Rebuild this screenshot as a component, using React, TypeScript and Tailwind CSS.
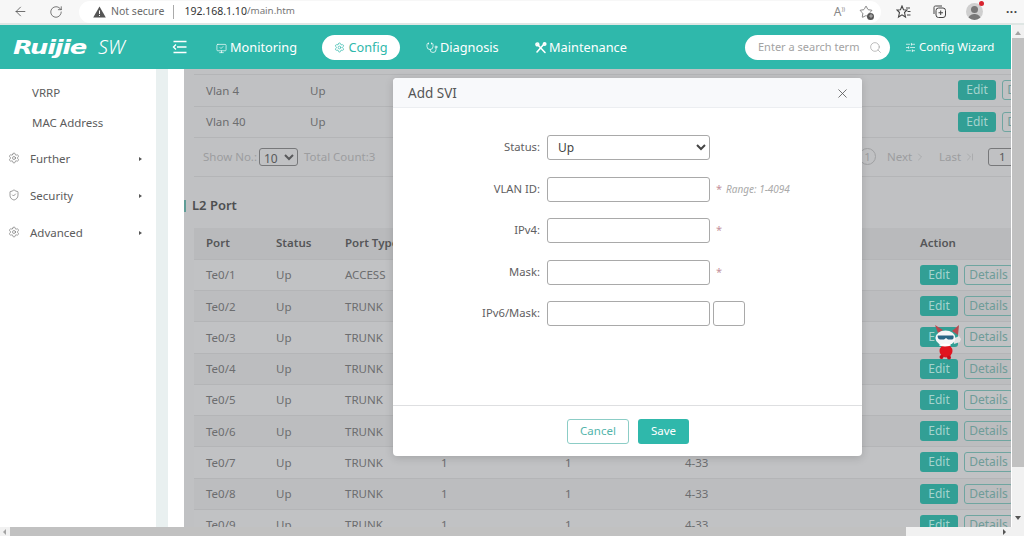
import React from "react";
import { ArrowLeft, RotateCw, Search, Settings, MonitorCheck, Stethoscope, SlidersHorizontal, X, Star, ChevronRight, ChevronLast, ShieldCheck, Plus } from "lucide-react";

const cols = ["w-[70px] shrink-0", "w-[69px] shrink-0", "w-[96px] shrink-0", "w-[124px] shrink-0", "w-[120px] shrink-0", "w-[235px] shrink-0"];

function Edit() {
  return <span className="flex h-[20px] w-[38px] shrink-0 items-center justify-center rounded-[3px] bg-[#329f95] text-[12px] text-[#a5d3ce]">Edit</span>;
}
function Details() {
  return <span className="ml-[6px] flex h-[20px] w-[49px] shrink-0 items-center justify-center rounded-[3px] border border-[#6fa5a0] text-[12px] text-[#6f9c98]">Details</span>;
}

function PortRow({ port, type, a, b, c, dark }: { port: string; type: string; a?: string; b?: string; c?: string; dark?: boolean }) {
  return (
    <div className={`flex h-[31.25px] shrink-0 items-center border-b border-[#b4b5b7] pl-[12px] text-[11.5px] text-[#6c6d6f] ${dark ? "bg-[#bcbdbf]" : "bg-[#c1c2c4]"}`}>
      <span className={cols[0]}>{port}</span>
      <span className={cols[1]}>Up</span>
      <span className={cols[2]}>{type}</span>
      <span className={cols[3]}>{a}</span>
      <span className={cols[4]}>{b}</span>
      <span className={cols[5]}>{c}</span>
      <Edit />
      <Details />
    </div>
  );
}

function VlanRow({ name }: { name: string }) {
  return (
    <div className="flex h-[31.25px] shrink-0 items-center border-b border-[#b4b5b7] pl-[12px] text-[11.5px] text-[#6c6d6f]">
      <span className="w-[104px] shrink-0">{name}</span>
      <span className="w-[648px] shrink-0">{name ? "Up" : ""}</span>
      <Edit />
      <Details />
    </div>
  );
}

function Field({ label, children }: { label: string; children: React.ReactNode }) {
  return (
    <div className="flex h-[25px] items-center">
      <span className="mr-[7px] w-[147px] text-right text-[11.25px] text-[#5f6062]">{label}</span>
      {children}
    </div>
  );
}

const inputCls = "h-[25px] w-[163px] rounded-[3px] border border-[#a9a9a9] bg-white";

function Star2() {
  return <span className="ml-[6px] text-[11px] text-[#c4929c]">*</span>;
}

function MenuIcon() {
  return (
    <svg width="16" height="14" viewBox="0 0 16 14" fill="none" stroke="white" strokeWidth="1.4">
      <path d="M1.500 1.500h13M5 7h9.500M1.500 12.500h13M4 4.500 1.500 7 4 9.500" />
    </svg>
  );
}
function ToolsIcon() {
  return (
    <svg width="12" height="12" viewBox="0 0 12 12" fill="none" stroke="white" strokeWidth="1.6" strokeLinecap="round">
      <path d="M2.500 2.500 10 10.500M9.500 1.500 2 10" />
      <circle cx="2.400" cy="2.400" r="1.400" />
      <circle cx="9.600" cy="2" r="1.200" />
    </svg>
  );
}
function Tri() {
  return <span className="h-0 w-0 border-y-[2.5px] border-l-[3px] border-y-transparent border-l-[#555]" />;
}
function SideItem({ icon, label }: { icon: React.ReactNode; label: string }) {
  return (
    <div className="flex h-[37px] items-center pl-[8px] pr-[14px] text-[11.5px] text-[#5c5c5c]">
      <span className="-mt-[2px] flex w-[22px] text-[#666]">{icon}</span>
      <span className="flex-1">{label}</span>
      <Tri />
    </div>
  );
}
function Mascot() {
  return (
    <svg width="30" height="36" viewBox="0 0 30 36" className="absolute left-[748px] top-[255px]">
      <path d="M6 9 3 1l8 5zM20 7l7-6-1 10z" fill="#b8484f" />
      <path d="M21 15l6-3 2 3-1 3-6 2z" fill="#e2e3e4" />
      <circle cx="14" cy="27" r="6.500" fill="#e0141f" />
      <circle cx="9.500" cy="33" r="2" fill="#c40f1a" />
      <circle cx="17" cy="33.500" r="2" fill="#c40f1a" />
      <ellipse cx="13.500" cy="14" rx="10" ry="7.500" fill="#f6f7f8" />
      <path d="M6 11.500h15c1 0 1 4-1 4h-4l-2-1.500-2 1.500H8c-2 0-3-4-2-4z" fill="#2a6786" />
      <ellipse cx="13" cy="21" rx="6" ry="1.500" fill="#ffffff" />
    </svg>
  );
}
function FavIcon() {
  return (
    <svg width="15" height="14" viewBox="0 0 15 14" fill="none" stroke="#444" strokeWidth="1.1" className="ml-[15px]">
      <path d="M6 1 7.500 4.700 11 5 8.500 7.500 9.500 12 6 9.800 2.500 12 3.500 7.500 1 5 4.500 4.700z" />
      <path d="M10 3h4M11.500 6.500h3M11 10h3.500" />
    </svg>
  );
}

export default function App() {
  return (
    <div className="flex h-[536px] w-[1024px] flex-col overflow-hidden bg-white font-['Noto_Sans','Open_Sans',sans-serif]">
      {/* browser chrome */}
      <div className="flex h-[25px] shrink-0 items-center border-b-2 border-[#dfe6e4] bg-[#f7f7f7] text-[#444]">
        <ArrowLeft size={15} strokeWidth={1.2} className="ml-[13px]" />
        <RotateCw size={14} strokeWidth={1.2} className="ml-[21px]" />
        <div className="ml-[16px] flex h-[22px] w-[802px] items-center rounded-full bg-white pl-[14px]">
          <svg width="13" height="12" viewBox="0 0 13 12"><path d="M6.500 0.500 12.800 11.500H.2z" fill="#555" /><path d="M6 4.500h1v3.600H6zM6 9h1v1H6z" fill="#fff" /></svg>
          <span className="ml-[5px] text-[10.5px] text-[#6a6a6a]">Not secure</span>
          <span className="ml-[9px] h-[14px] w-px bg-[#aaa]" />
          <span className="ml-[10px] text-[10.5px] text-[#333]">192.168.1.10</span>
          <span className="text-[9.75px] text-[#777]">/main.htm</span>
          <span className="ml-auto text-[12px] text-[#888]">A<span className="align-super text-[6px]">))</span></span>
          <span className="relative ml-[14px] mr-[8px] text-[#555]">
            <Star size={14} strokeWidth={1.2} />
            <span className="absolute -bottom-[1px] -right-[1px] flex h-[7px] w-[7px] items-center justify-center rounded-full bg-[#555]"><Plus size={6} color="white" /></span>
          </span>
        </div>
        <FavIcon />
        <svg width="15" height="15" viewBox="0 0 15 15" fill="none" stroke="#444" className="ml-[21px]"><path d="M2 10V3.500C2 2.500 2.500 2 3.500 2H10" /><rect x="4" y="4" width="9.500" height="9.500" rx="2.500" /><path d="M8.700 6.500v4.500M6.500 8.750h4.500" /></svg>
        <span className="relative ml-[19px] h-[17px] w-[17px]">
          <span className="absolute inset-0 flex items-end justify-center overflow-hidden rounded-full bg-[#cfcfcf]">
            <span className="absolute top-[3px] h-[7px] w-[7px] rounded-full bg-[#777]" />
            <span className="h-[6px] w-[13px] rounded-t-full bg-[#777]" />
          </span>
          <span className="absolute -right-[1px] -top-[2px] h-[5px] w-[5px] rounded-full bg-[#d8232f]" />
        </span>
        <span className="ml-[23px] text-[12px] font-bold leading-none tracking-[0.5px] text-[#444]">···</span>
      </div>

      <div className="flex min-h-0 flex-1">
        <div className="flex min-w-0 flex-1 flex-col">
          {/* app header */}
          <div className="flex h-[44px] shrink-0 items-center overflow-hidden bg-[#2fb8ab] text-white">
            <span className="ml-[13px] w-[76px] shrink-0 origin-left scale-x-[1.36] font-['DejaVu_Sans',sans-serif] text-[19px] font-bold italic leading-none tracking-[-1px]">Ruijie</span>
            <span className="ml-[9px] w-[74px] shrink-0 text-[20px] font-light italic leading-none">SW</span>
            <MenuIcon />
            <div className="ml-[28px] flex w-[106px] shrink-0 items-center pt-[2px] text-[12.75px]"><MonitorCheck size={11} strokeWidth={1.5} /><span className="ml-[3px]">Monitoring</span></div>
            <div className="flex h-[25px] w-[78px] shrink-0 items-center justify-center rounded-full bg-white pt-[1px] text-[12.75px] text-[#2fb8ab]"><Settings size={11} strokeWidth={1.5} /><span className="ml-[3px]">Config</span></div>
            <div className="ml-[26px] flex w-[109px] shrink-0 items-center pt-[2px] text-[12.75px]"><Stethoscope size={12} strokeWidth={1.5} /><span className="ml-[2px]">Diagnosis</span></div>
            <div className="flex w-[210px] shrink-0 items-center pt-[2px] text-[12.75px]"><ToolsIcon /><span className="ml-[2px]">Maintenance</span></div>
            <div className="flex h-[25px] w-[145px] shrink-0 items-center justify-between rounded-full bg-white pl-[13px] pr-[8px] text-[11px] text-[#a3a3a3]"><span>Enter a search term</span><Search size={13} strokeWidth={1.3} /></div>
            <div className="ml-[15px] flex shrink-0 items-center text-[11.5px]"><SlidersHorizontal size={11} strokeWidth={1.5} /><span className="ml-[3px] whitespace-nowrap">Config Wizard</span></div>
          </div>

          <div className="flex min-h-0 flex-1">
            {/* sidebar */}
            <div className="w-[156px] shrink-0 bg-white pt-[9px]">
              <div className="flex h-[30px] items-center pl-[32px] text-[11.5px] text-[#5c5c5c]">VRRP</div>
              <div className="flex h-[29px] items-center pl-[32px] text-[11.5px] text-[#5c5c5c]">MAC Address</div>
              <div className="mt-[3px]">
                <SideItem icon={<Settings size={12} strokeWidth={1.2} />} label="Further" />
                <SideItem icon={<ShieldCheck size={12} strokeWidth={1.3} />} label="Security" />
                <SideItem icon={<Settings size={12} strokeWidth={1.2} />} label="Advanced" />
              </div>
            </div>
            <div className="w-[12px] shrink-0 bg-[#e9f0f0]" />
            <div className="w-[16px] shrink-0 bg-white" />

            {/* dimmed content */}
            <div className="relative min-w-0 flex-1 overflow-hidden bg-[#c0c1c3]">
              <div className="-mt-[25px] ml-[10px] w-[830px]">
                <VlanRow name="" />
                <VlanRow name="Vlan 4" />
                <VlanRow name="Vlan 40" />
                <div className="flex h-[39px] items-center whitespace-nowrap border-b border-[#b4b5b7] pl-[9px] text-[11.5px] text-[#9c9d9f]">
                  <span className="w-[53px] shrink-0">Show No.:</span>
                  <select defaultValue="10" className="ml-[3px] h-[18px] w-[39px] shrink-0 rounded-[3px] border border-[#77787a] bg-transparent text-[12px] text-[#58595b]"><option>10</option></select>
                  <span className="ml-[6px] w-[70px] shrink-0">Total Count:3</span>
                  <span className="ml-[485px] flex h-[17px] w-[17px] shrink-0 items-center justify-center rounded-full border border-[#a0a1a3]">1</span>
                  <span className="ml-[11px] w-[24px] shrink-0">Next</span>
                  <ChevronRight size={12} strokeWidth={1.2} className="ml-[3px] shrink-0" />
                  <span className="ml-[13px] w-[22px] shrink-0">Last</span>
                  <ChevronLast size={12} strokeWidth={1.2} className="ml-[3px] shrink-0" />
                  <span className="ml-[12px] flex h-[18px] w-[30px] shrink-0 items-center rounded-[3px] border border-[#77787a] pl-[10px] text-[#58595b]">1</span>
                </div>
              </div>
              <div className="relative mt-[19px] flex h-[20px] items-center pl-[8px] text-[13px] font-semibold text-[#4e4f51]">
                <span className="absolute left-0 top-[4px] h-[12px] w-[2px] bg-[#5f9c96]" />
                L2 Port
              </div>
              <div className="ml-[10px] mt-[12px] flex w-[830px] flex-col">
                <div className="flex h-[32px] shrink-0 items-center border-b border-[#b4b5b7] bg-[#b9babc] pb-[2px] pl-[12px] text-[11.5px] font-semibold text-[#555658]">
                  <span className={cols[0]}>Port</span>
                  <span className={cols[1]}>Status</span>
                  <span className={cols[2]}>Port Type</span>
                  <span className={cols[3]} />
                  <span className={cols[4]} />
                  <span className={cols[5]} />
                  <span>Action</span>
                </div>
                <PortRow port="Te0/1" type="ACCESS" />
                <PortRow port="Te0/2" type="TRUNK" dark />
                <PortRow port="Te0/3" type="TRUNK" />
                <PortRow port="Te0/4" type="TRUNK" dark />
                <PortRow port="Te0/5" type="TRUNK" />
                <PortRow port="Te0/6" type="TRUNK" dark />
                <PortRow port="Te0/7" type="TRUNK" a="1" b="1" c="4-33" />
                <PortRow port="Te0/8" type="TRUNK" a="1" b="1" c="4-33" dark />
                <PortRow port="Te0/9" type="TRUNK" a="1" b="1" c="4-33" />
              </div>

              <Mascot />

              {/* modal */}
              <div className="absolute left-[209px] top-[9px] flex h-[378px] w-[469px] flex-col overflow-hidden rounded-[4px] bg-white shadow-[0_2px_8px_rgba(0,0,0,0.15)]">
                <div className="flex h-[30px] shrink-0 items-center justify-between border-b border-[#eceef1] bg-[#f8f9fb] pl-[15px] pr-[12px] pt-[2px] text-[13.5px] text-[#555]">
                  <span>Add SVI</span>
                  <X size={15} strokeWidth={1.3} />
                </div>
                <div className="flex flex-1 flex-col gap-[16.5px] pt-[27px]">
                  <Field label="Status:">
                    <select defaultValue="Up" className="h-[25px] w-[163px] rounded-[3px] border border-[#a9a9a9] bg-white pl-[6px] text-[12px] text-[#444]">
                      <option>Up</option>
                      <option>Down</option>
                    </select>
                  </Field>
                  <Field label="VLAN ID:">
                    <input className={inputCls} />
                    <Star2 />
                    <span className="ml-[4px] text-[10px] italic text-[#aaaaaa]">Range: 1-4094</span>
                  </Field>
                  <Field label="IPv4:">
                    <input className={inputCls} />
                    <Star2 />
                  </Field>
                  <Field label="Mask:">
                    <input className={inputCls} />
                    <Star2 />
                  </Field>
                  <Field label="IPv6/Mask:">
                    <input className={inputCls} />
                    <input className="ml-[3px] h-[25px] w-[32px] rounded-[3px] border border-[#a9a9a9] bg-white" />
                  </Field>
                </div>
                <div className="flex h-[51px] shrink-0 items-center border-t border-[#dedfe1] pl-[174px]">
                  <span className="flex h-[25px] w-[62px] items-center justify-center rounded-[3px] border border-[#8ccdc6] text-[11.5px] text-[#54b5ab]">Cancel</span>
                  <span className="ml-[9px] flex h-[25px] w-[51px] items-center justify-center rounded-[3px] bg-[#2fb8ab] text-[11.5px] text-white">Save</span>
                </div>
              </div>
            </div>
          </div>
        </div>

        {/* vertical scrollbar */}
        <div className="flex w-[13px] shrink-0 flex-col items-center border-l border-white bg-[#f1f1f1]">
          <span className="mt-[6px] h-0 w-0 border-x-[3px] border-b-[4px] border-x-transparent border-b-[#a3a3a3]" />
          <span className="mt-[3px] h-[429px] w-full bg-[#c1c1c1]" />
          <span className="mt-auto mb-[7px] h-0 w-0 border-x-[3px] border-t-[4px] border-x-transparent border-t-[#555]" />
        </div>
      </div>

      {/* horizontal scrollbar */}
      <div className="flex h-[9px] shrink-0 items-center bg-[#f1f1f1]">
        <span className="ml-[3px] h-0 w-0 border-y-[3px] border-r-[3px] border-y-transparent border-r-[#a3a3a3]" />
        <span className="ml-[4px] h-full w-[896px] bg-[#c1c1c1]" />
        <span className="ml-[97px] h-0 w-0 border-y-[3px] border-l-[3px] border-y-transparent border-l-[#555]" />
      </div>
    </div>
  );
}
